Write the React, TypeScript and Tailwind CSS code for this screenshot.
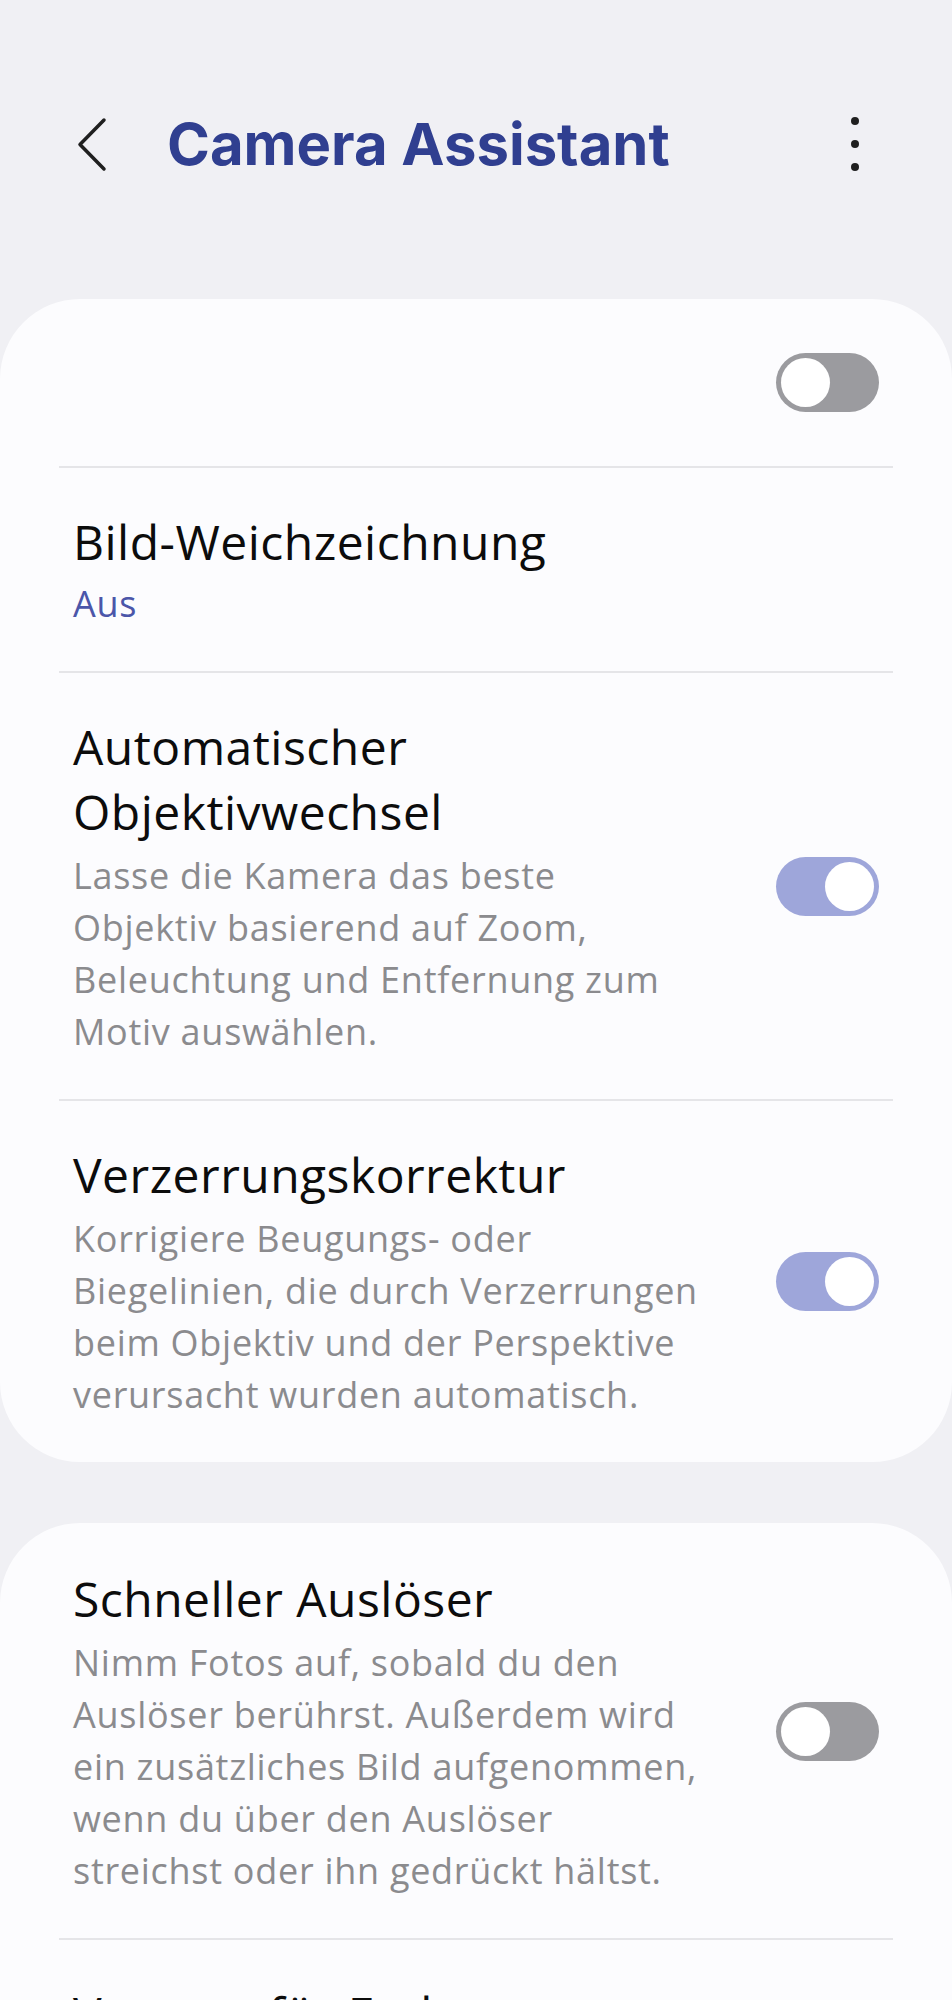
import React from 'react';

type Setting = {
  title: string[];
  summary?: string[];
  value?: string;
  toggle?: boolean;
};

const firstCard: Setting[] = [
  { title: ['Bild-Weichzeichnung'], value: 'Aus' },
  {
    title: ['Automatischer', 'Objektivwechsel'],
    summary: [
      'Lasse die Kamera das beste',
      'Objektiv basierend auf Zoom,',
      'Beleuchtung und Entfernung zum',
      'Motiv auswählen.',
    ],
    toggle: true,
  },
  {
    title: ['Verzerrungskorrektur'],
    summary: [
      'Korrigiere Beugungs- oder',
      'Biegelinien, die durch Verzerrungen',
      'beim Objektiv und der Perspektive',
      'verursacht wurden automatisch.',
    ],
    toggle: true,
  },
];

const secondCard: Setting[] = [
  {
    title: ['Schneller Auslöser'],
    summary: [
      'Nimm Fotos auf, sobald du den',
      'Auslöser berührst. Außerdem wird',
      'ein zusätzliches Bild aufgenommen,',
      'wenn du über den Auslöser',
      'streichst oder ihn gedrückt hältst.',
    ],
    toggle: false,
  },
  {
    title: ['Vorrang für Farbe'],
    summary: ['Aus'],
  },
];

function Toggle({ on }: { on: boolean }) {
  return (
    <div
      className={
        on
          ? 'flex h-[59px] w-[103px] shrink-0 items-center justify-end rounded-full bg-[#9ea6da] p-[5px]'
          : 'flex h-[59px] w-[103px] shrink-0 items-center justify-start rounded-full bg-[#9b9b9f] p-[5px]'
      }
    >
      <div className="h-[49px] w-[49px] rounded-full bg-white" />
    </div>
  );
}

function Divider() {
  return <div className="h-[2px] bg-[#e5e5e8]" />;
}

function SettingRow({ item }: { item: Setting }) {
  return (
    <div className="flex items-center gap-4 px-[14px] py-[41px]">
      <div className="min-w-0 flex-1">
        {item.title.map(line => (
          <div
            key={line}
            className="whitespace-nowrap text-[48px] leading-[65px] tracking-[0.01em] text-[#0c0c0c]"
          >
            {line}
          </div>
        ))}
        {item.value && (
          <div className="mt-[4px] text-[36px] leading-[52px] tracking-[0.02em] text-[#4b56a9]">
            {item.value}
          </div>
        )}
        {item.summary && (
          <div className="mt-[6px]">
            {item.summary.map(line => (
              <div
                key={line}
                className="whitespace-nowrap text-[36px] leading-[52px] tracking-[0.02em] text-[#8b8b8e]"
              >
                {line}
              </div>
            ))}
          </div>
        )}
      </div>
      {item.toggle !== undefined && <Toggle on={item.toggle} />}
    </div>
  );
}

export default function App() {
  return (
    <div className="min-h-screen bg-[#f0f0f4] pt-[112px] font-['Open_Sans',sans-serif]">
      {/* app bar */}
      <header className="flex h-[64px] items-center pl-[76px] pr-[93px]">
        <svg width="32" height="58" viewBox="0 0 32 58" fill="none">
          <polyline
            points="28,5 4,29.5 28,54"
            stroke="#1f1f1f"
            strokeWidth="3.5"
            strokeLinecap="round"
            strokeLinejoin="round"
          />
        </svg>
        <h1 className="ml-[59px] font-['Inter',sans-serif] text-[58px] font-bold leading-[64px] text-[#303f90]">
          Camera Assistant
        </h1>
        <div className="ml-auto flex flex-col items-center gap-[15px]">
          <span className="h-[8px] w-[8px] rounded-full bg-[#1f1f1f]" />
          <span className="h-[8px] w-[8px] rounded-full bg-[#1f1f1f]" />
          <span className="h-[8px] w-[8px] rounded-full bg-[#1f1f1f]" />
        </div>
      </header>

      <main className="mt-[123px] flex flex-col gap-[61px]">
        <section className="rounded-[80px] bg-[#fcfcfe]">
          <div className="mx-[59px]">
            <div className="flex h-[167px] items-center justify-end px-[14px]">
              <Toggle on={false} />
            </div>
            {firstCard.map(item => (
              <div key={item.title[0]}>
                <Divider />
                <SettingRow item={item} />
              </div>
            ))}
          </div>
        </section>

        <section className="rounded-[80px] bg-[#fcfcfe] pt-[2px]">
          <div className="mx-[59px]">
            {secondCard.map((item, i) => (
              <div key={item.title[0]}>
                {i > 0 && <Divider />}
                <SettingRow item={item} />
              </div>
            ))}
          </div>
        </section>
      </main>
    </div>
  );
}
